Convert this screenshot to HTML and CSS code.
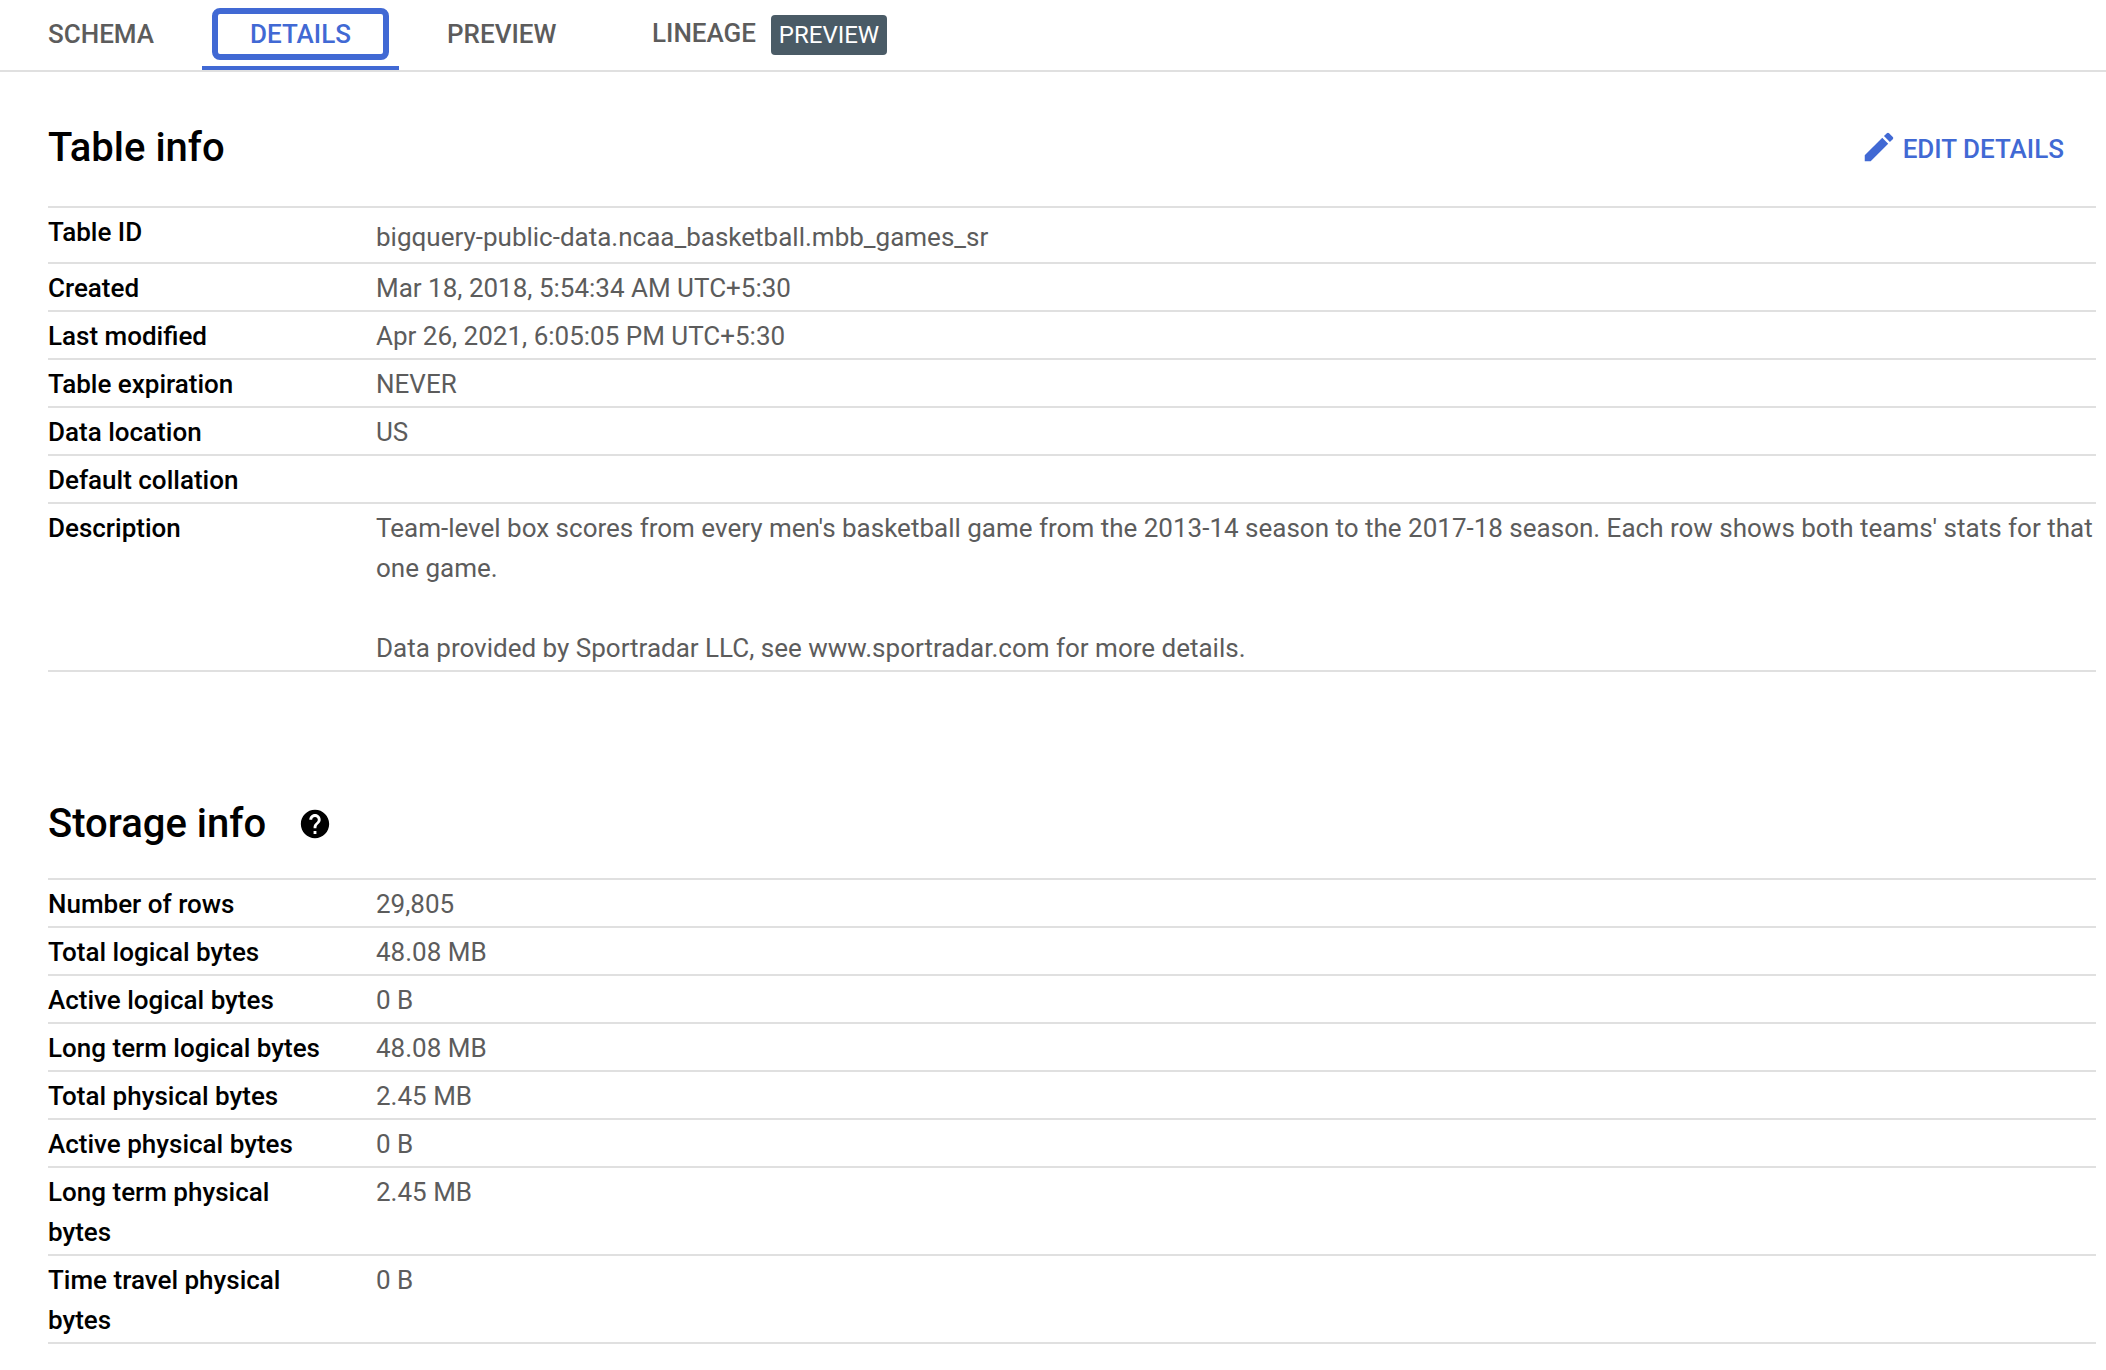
FILE: index.html
```html
<!DOCTYPE html>
<html lang="en">
<head>
<meta charset="utf-8">
<title>Table details</title>
<link rel="stylesheet" href="styles.css">
</head>
<body>
<nav class="tabs">
  <a class="tab tab-schema">SCHEMA</a>
  <a class="tab tab-details"><span class="focus">DETAILS</span></a>
  <a class="tab tab-preview">PREVIEW</a>
  <a class="tab tab-lineage">LINEAGE<span class="badge">PREVIEW</span></a>
</nav>
<main class="content">
  <section class="section">
    <header class="head head-table">
      <h2>Table info</h2>
      <a class="edit">
        <svg class="pencil" viewBox="0 0 24 24" aria-hidden="true"><path d="M3 17.25V21h3.75L17.81 9.94l-3.75-3.75L3 17.25zM20.71 7.04a1 1 0 0 0 0-1.41l-2.34-2.34a1 1 0 0 0-1.41 0l-1.83 1.83 3.75 3.75 1.83-1.83z"/></svg>
        EDIT DETAILS
      </a>
    </header>
    <dl class="rows">
      <div class="row row-first"><dt>Table ID</dt><dd>bigquery-public-data.ncaa_basketball.mbb_games_sr</dd></div>
      <div class="row"><dt>Created</dt><dd>Mar 18, 2018, 5:54:34 AM UTC+5:30</dd></div>
      <div class="row"><dt>Last modified</dt><dd>Apr 26, 2021, 6:05:05 PM UTC+5:30</dd></div>
      <div class="row"><dt>Table expiration</dt><dd>NEVER</dd></div>
      <div class="row"><dt>Data location</dt><dd>US</dd></div>
      <div class="row"><dt>Default collation</dt><dd></dd></div>
      <div class="row"><dt>Description</dt><dd>Team-level box scores from every men's basketball game from the 2013-14 season to the 2017-18 season. Each row shows both teams' stats for that one game.<br><br>Data provided by Sportradar LLC, see www.sportradar.com for more details.</dd></div>
    </dl>
  </section>
  <section class="section section-storage">
    <header class="head head-storage">
      <h2>Storage info</h2>
      <svg class="help" viewBox="0 0 24 24" aria-hidden="true"><path d="M12 2C6.48 2 2 6.48 2 12s4.480 10 10 10 10-4.480 10-10S17.520 2 12 2zm1 17h-2v-2h2v2zm2.070-7.750-.9.920C13.450 12.900 13 13.500 13 15h-2v-.5c0-1.100.450-2.100 1.170-2.830l1.240-1.260c.370-.360.590-.860.590-1.410 0-1.100-.9-2-2-2s-2 .9-2 2H8c0-2.210 1.790-4 4-4s4 1.790 4 4c0 .880-.360 1.680-.930 2.250z"/></svg>
    </header>
    <dl class="rows">
      <div class="row"><dt>Number of rows</dt><dd>29,805</dd></div>
      <div class="row"><dt>Total logical bytes</dt><dd>48.08 MB</dd></div>
      <div class="row"><dt>Active logical bytes</dt><dd>0 B</dd></div>
      <div class="row"><dt>Long term logical bytes</dt><dd>48.08 MB</dd></div>
      <div class="row"><dt>Total physical bytes</dt><dd>2.45 MB</dd></div>
      <div class="row"><dt>Active physical bytes</dt><dd>0 B</dd></div>
      <div class="row"><dt>Long term physical bytes</dt><dd>2.45 MB</dd></div>
      <div class="row"><dt>Time travel physical bytes</dt><dd>0 B</dd></div>
    </dl>
  </section>
</main>
</body>
</html>
```
FILE: styles.css
```css
* { box-sizing: border-box; }
html, body { margin: 0; padding: 0; background: #fff; }
body {
  width: 2106px;
  height: 1370px;
  overflow: hidden;
  font-family: Roboto, "Liberation Sans", sans-serif;
  color: #5c5c5c;
}
.tabs {
  display: flex;
  height: 72px;
  border-bottom: 2px solid #e0e0e0;
  padding-left: 48px;
  align-items: stretch;
  font-size: 26px;
  font-weight: 500;
  color: #5c5c5c;
}
.tab {
  display: flex;
  align-items: center;
  height: 70px;
  padding-bottom: 2px;
}
.tab-schema { width: 154px; }
.tab-details {
  width: 197px;
  padding-bottom: 0;
  justify-content: center;
  color: #4169d4;
  border-bottom: 4px solid #4169d4;
}
.focus {
  display: flex;
  align-items: center;
  justify-content: center;
  width: 177px;
  height: 52px;
  margin-top: 2px;
  border: 6px solid #4169d4;
  border-radius: 8px;
}
.tab-preview { margin-left: 48px; width: 205px; }
.tab-lineage { padding-bottom: 4px; }
.badge {
  display: inline-flex;
  align-items: center;
  justify-content: center;
  width: 116px;
  height: 40px;
  margin-left: 15px;
  margin-top: 4px;
  background: #4a5b66;
  color: #fff;
  border-radius: 4px;
  font-size: 24px;
  font-weight: 400;
}
.content { padding: 0 10px 0 48px; }
.head { display: flex; align-items: center; }
.head-table { justify-content: space-between; height: 134px; padding: 18px 32px 0 0; }
.head h2 {
  margin: 0;
  font-size: 40px;
  line-height: 56px;
  font-weight: 500;
  color: #000;
}
.edit {
  display: flex;
  align-items: center;
  margin-top: 1px;
  color: #4169d4;
  font-size: 26px;
  font-weight: 500;
}
.pencil { width: 38px; height: 38px; margin: 0 5px 3px -1px; fill: #4169d4; }
.section-storage { margin-top: 116px; }
.head-storage { height: 90px; padding-bottom: 18px; }
.help { width: 34px; height: 34px; fill: #000; margin-left: 32px; }
.rows { margin: 0; border-top: 2px solid #e0e0e0; }
.row {
  display: grid;
  grid-template-columns: 328px 1fr;
  border-bottom: 2px solid #e0e0e0;
  padding: 4px 0 2px;
  font-size: 26px;
  line-height: 40px;
}
.row-first { padding-bottom: 5px; }
.row-first dd { padding-top: 5px; }
.row dt { width: 280px; font-weight: 500; color: #000; }
.row dd { margin: 0; color: #5c5c5c; }
```
